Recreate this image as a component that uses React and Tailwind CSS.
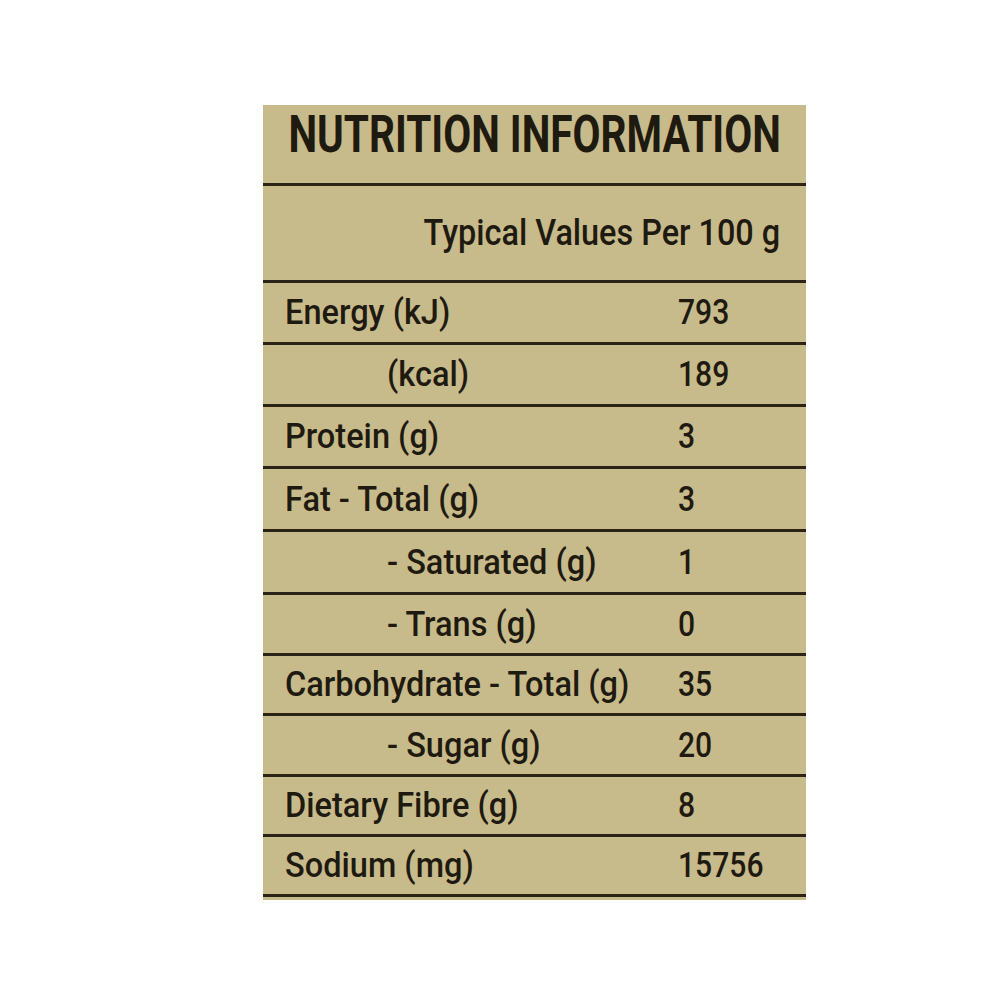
import React from "react";

const rows = [
  { label: "Energy (kJ)", value: "793", h: "h-[62px]" },
  { label: "(kcal)", value: "189", h: "h-[62px]", indent: true },
  { label: "Protein (g)", value: "3", h: "h-[62px]" },
  { label: "Fat - Total (g)", value: "3", h: "h-[63px]" },
  { label: "- Saturated (g)", value: "1", h: "h-[63px]", indent: true },
  { label: "- Trans (g)", value: "0", h: "h-[61px]", indent: true },
  { label: "Carbohydrate - Total (g)", value: "35", h: "h-[60px]" },
  { label: "- Sugar (g)", value: "20", h: "h-[61px]", indent: true },
  { label: "Dietary Fibre (g)", value: "8", h: "h-[60px]" },
  { label: "Sodium (mg)", value: "15756", h: "h-[60px]" },
];

export default function App() {
  return (
    <div className="min-h-screen w-full bg-white pt-[105px] pl-[263px] font-['Roboto','Liberation_Sans',sans-serif] text-[#1f1a10]">
      <div className="w-[543px] bg-[#c8bb8b] pb-[3px]">
        {/* title */}
        <div className="h-[81px] border-b-[3px] border-[#2b2416] flex justify-center pt-[4px]">
          <span className="inline-block whitespace-nowrap scale-x-[0.78] text-[52px] leading-none font-bold">
            NUTRITION INFORMATION
          </span>
        </div>

        {/* per 100 g */}
        <div className="h-[97px] border-b-[3px] border-[#2b2416] flex items-center justify-end pr-[26px]">
          <span className="inline-block whitespace-nowrap origin-right scale-x-[0.9] text-[36px] leading-none font-medium">
            Typical Values Per 100 g
          </span>
        </div>

        {rows.map((r) => (
          <div
            key={r.label}
            className={`${r.h} border-b-[3px] border-[#2b2416] grid grid-cols-[393px_1fr] items-center pl-[22px] text-[35px] leading-none font-medium`}
          >
            <div className={r.indent ? "pl-[102px]" : ""}>
              <span className="inline-block whitespace-nowrap origin-left scale-x-[0.93]">
                {r.label}
              </span>
            </div>
            <div>
              <span className="inline-block whitespace-nowrap origin-left scale-x-[0.86]">
                {r.value}
              </span>
            </div>
          </div>
        ))}
      </div>
    </div>
  );
}
